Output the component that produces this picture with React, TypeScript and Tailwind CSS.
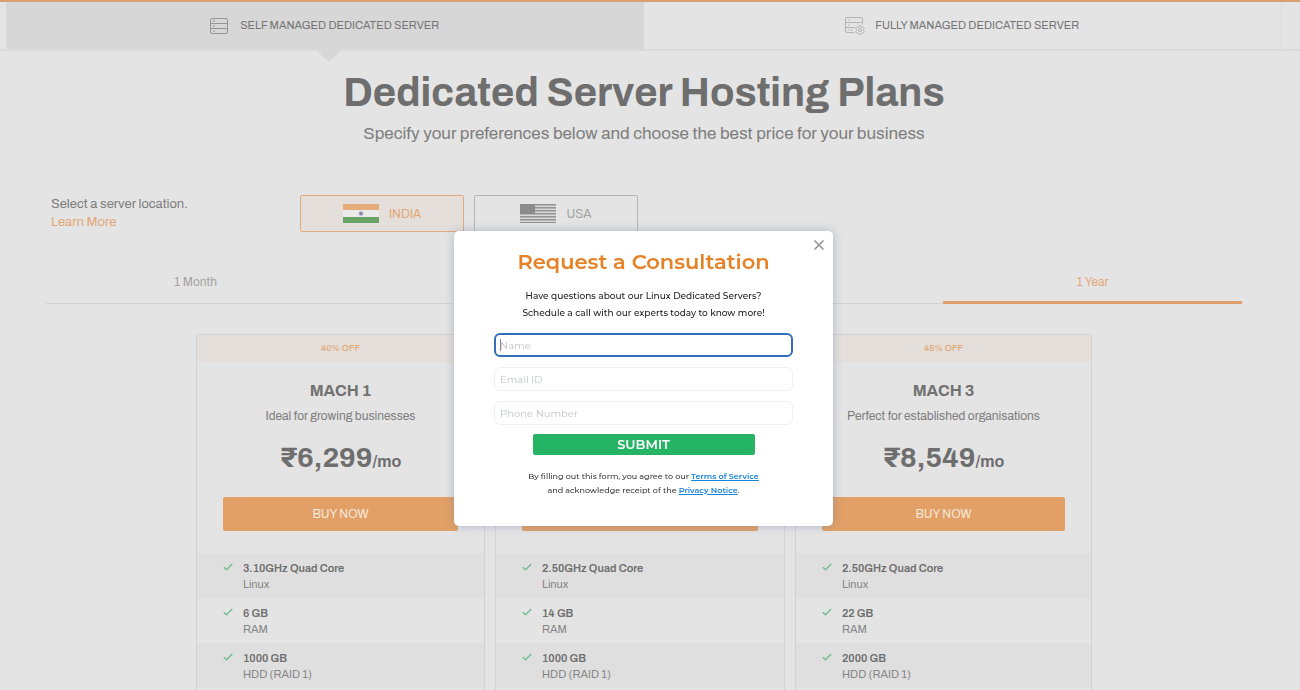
import type { ReactNode } from "react";

type Feature = { value: string; label: string };

type Plan = {
  name: string;
  discount: string;
  description: string;
  price: string;
  features: Feature[];
  behindDialog?: boolean;
};

const plans: Plan[] = [
  {
    name: "MACH 1",
    discount: "40% OFF",
    description: "Ideal for growing businesses",
    price: "₹6,299",
    features: [
      { value: "3.10GHz Quad Core", label: "Linux" },
      { value: "6 GB", label: "RAM" },
      { value: "1000 GB", label: "HDD (RAID 1)" },
    ],
  },
  {
    name: "MACH 2",
    discount: "40% OFF",
    description: "Ideal for growing businesses",
    price: "₹7,499",
    behindDialog: true,
    features: [
      { value: "2.50GHz Quad Core", label: "Linux" },
      { value: "14 GB", label: "RAM" },
      { value: "1000 GB", label: "HDD (RAID 1)" },
    ],
  },
  {
    name: "MACH 3",
    discount: "45% OFF",
    description: "Perfect for established organisations",
    price: "₹8,549",
    features: [
      { value: "2.50GHz Quad Core", label: "Linux" },
      { value: "22 GB", label: "RAM" },
      { value: "2000 GB", label: "HDD (RAID 1)" },
    ],
  },
];

const periods = ["1 Month", "3 Months", "6 Months", "1 Year"];

function ServerIcon() {
  return (
    <svg width="18" height="16" viewBox="0 0 18 16" fill="none" stroke="#959595" aria-hidden="true">
      <rect x="0.5" y="0.5" width="17" height="15" rx="1.5" />
      <path d="M0.5 5.5h17M0.5 10.5h17" />
      <path d="M3 3h2M3 8h2M3 13h2" />
    </svg>
  );
}

function ManagedServerIcon() {
  return (
    <svg width="20" height="18" viewBox="0 0 20 18" fill="none" stroke="#b3b3b3" aria-hidden="true">
      <path d="M9 15.5H2A1.5 1.5 0 0 1 0.5 14V2A1.5 1.5 0 0 1 2 0.5h14A1.5 1.5 0 0 1 17.5 2v5.5" />
      <path d="M0.5 5.5h17M0.5 10.5h9" />
      <path d="M3 3h1.500M3 8h1.500M3 13h1.500M6 13h2" />
      <path d="M14.200 8.700h1.600l0.400 1.300 1.200 0.500 1.200-0.400 0.800 1.400-0.900 1 0 1.200 0.900 1-0.800 1.400-1.200-0.300-1.200 0.500-0.400 1.200h-1.600l-0.400-1.200-1.200-0.500-1.200 0.300-0.800-1.400 0.900-1 0-1.200-0.900-1 0.800-1.400 1.200 0.400 1.200-0.500z" />
      <circle cx="15" cy="13" r="1.500" />
    </svg>
  );
}

function IndiaFlag() {
  return (
    <svg width="36" height="19" viewBox="0 0 36 19" aria-hidden="true">
      <rect width="36" height="19" fill="#ebebeb" />
      <rect width="36" height="6" fill="#e5ab78" />
      <rect y="13" width="36" height="6" fill="#6aa566" />
      <circle cx="18" cy="9.500" r="2.300" fill="#a9a6c2" />
      <circle cx="18" cy="9.500" r="1.300" fill="#8482ad" />
    </svg>
  );
}

function UsaFlag() {
  return (
    <svg width="36" height="19" viewBox="0 0 36 19" aria-hidden="true">
      <rect width="36" height="19" fill="#d9d9d9" />
      {[0, 3, 6, 9, 12, 15, 18].map((y) => (
        <rect key={y} y={y} width="36" height="1.500" fill="#929292" />
      ))}
      <rect width="15" height="10" fill="#8b8b8b" />
    </svg>
  );
}

function CheckIcon() {
  return (
    <svg width="10" height="8" viewBox="0 0 10 8" fill="none" stroke="#74bd94" strokeWidth="1.500" aria-hidden="true">
      <path d="M0.800 4.200 3.500 6.800 9.200 1" />
    </svg>
  );
}

function PlanCard({ plan }: { plan: Plan }) {
  return (
    <article className="rounded-t-[3px] border border-[#d2d2d2]">
      <p
        className={`bg-[#e4dfda] text-center text-[9px] leading-[27px] font-medium text-[#e3a775] ${
          plan.behindDialog ? "invisible" : ""
        }`}
      >
        {plan.discount}
      </p>
      <div className="px-[26px] pb-[22px] text-center">
        <div className={plan.behindDialog ? "invisible" : ""}>
          <h2 className="pt-[17px] text-base leading-6 font-bold text-[#727272]">{plan.name}</h2>
          <p className="mt-[3px] text-xs leading-5 text-[#7d7d7d]">{plan.description}</p>
          <p className="mt-3 text-[28px] leading-10 font-bold text-[#6e6e6e]">
            {plan.price}
            <span className="text-base">/mo</span>
          </p>
        </div>
        <button type="button" className="mt-[19px] block h-[34px] w-full rounded-[2px] bg-[#e2a066] text-xs text-[#f5e8dc]">
          BUY NOW
        </button>
      </div>
      <ul className="pb-6">
        {plan.features.map((feature) => (
          <li key={feature.label} className="flex h-[45px] items-start gap-2.5 px-[26px] pt-[7px] odd:bg-[#dfdfdf]">
            <span className="pt-[3px]">
              <CheckIcon />
            </span>
            <p className="text-[11px] leading-4 text-[#858585]">
              <strong className="block font-semibold text-[#6e6e6e]">{feature.value}</strong>
              {feature.label}
            </p>
          </li>
        ))}
      </ul>
    </article>
  );
}

function LocationButton({ active, children }: { active?: boolean; children: ReactNode }) {
  return (
    <button
      type="button"
      aria-pressed={!!active}
      className={`flex h-[37px] w-[164px] items-center justify-center gap-2.5 rounded-[2px] border text-xs ${
        active ? "border-[#e3aa7c] bg-[#e4dfdb] text-[#e3a775]" : "border-[#b5b5b5] text-[#a3a3a3]"
      }`}
    >
      {children}
    </button>
  );
}

function Field({ label, type = "text", focused }: { label: string; type?: string; focused?: boolean }) {
  return (
    <div className="relative w-full">
      <input
        type={type}
        aria-label={label}
        placeholder={label}
        autoFocus={focused}
        className="block h-6 w-full rounded-md border border-[#f0f0f1] px-[5px] text-[10px] text-[#444] caret-transparent outline-none placeholder:text-[#c3c5cb] focus:border-2 focus:border-[#2f70b8] focus:px-1"
      />
      {focused && <span className="absolute top-1.5 left-1.5 h-3 w-px bg-[#8a8a8a]" />}
    </div>
  );
}

function ConsultationDialog() {
  return (
    <div className="fixed inset-0 flex items-start justify-center pt-[231px] pr-[13px]">
      <section
        role="dialog"
        aria-modal="true"
        aria-labelledby="dialog-title"
        className="relative w-[379px] rounded-[5px] bg-white px-10 pt-[17px] pb-[29px] text-center font-['Montserrat','Inter',sans-serif] shadow-[0_0_10px_rgba(110,125,165,0.45)]"
      >
        <button type="button" aria-label="Close" className="absolute top-2 right-2 flex size-3 items-center justify-center">
          <svg width="12" height="12" viewBox="0 0 12 12" stroke="#929292" strokeWidth="1.500" aria-hidden="true">
            <path d="M1.500 1.500l9 9M10.500 1.500l-9 9" />
          </svg>
        </button>
        <h2 id="dialog-title" className="text-[21px] leading-7 font-semibold text-[#e68225]">
          Request a Consultation
        </h2>
        <p className="mt-[11px] text-[9px] leading-[17px] font-medium text-[#222]">
          Have questions about our Linux Dedicated Servers?
          <br />
          Schedule a call with our experts today to know more!
        </p>
        <form className="mt-3 flex flex-col items-center" onSubmit={(e) => e.preventDefault()}>
          <div className="flex w-full flex-col gap-2.5">
            <Field label="Name" focused />
            <Field label="Email ID" type="email" />
            <Field label="Phone Number" type="tel" />
          </div>
          <button type="submit" className="mt-[9px] h-[21px] w-[222px] rounded-[2px] bg-[#25b463] pb-px text-[13px] leading-5 font-semibold text-white">
            SUBMIT
          </button>
        </form>
        <p className="mt-3.5 text-[8px] leading-3.5 font-medium text-[#3a3a3a]">
          By filling out this form, you agree to our{" "}
          <a href="#terms" className="font-semibold text-[#1683dc] underline">
            Terms of Service
          </a>
          <br />
          and acknowledge receipt of the{" "}
          <a href="#privacy" className="font-semibold text-[#1683dc] underline">
            Privacy Notice
          </a>
          .
        </p>
      </section>
    </div>
  );
}

export default function App() {
  return (
    <div className="h-screen overflow-hidden bg-[#e4e4e4] font-['Archivo','Liberation_Sans',sans-serif] text-[#7d7d7d]">
      <header className="border-t-2 border-b-2 border-t-[#d8a070] border-b-[#dadada] pr-[18px] pl-1.5">
        <nav className="grid grid-cols-2 border-r border-[#dadada] text-[11px] text-[#747474]">
          <a href="#self-managed" className="relative flex h-[47px] items-center justify-center gap-3 bg-[#d7d7d7]">
            <ServerIcon />
            SELF MANAGED DEDICATED SERVER
            <svg className="absolute top-full left-1/2 -ml-2" width="24" height="13" viewBox="0 0 24 13" aria-hidden="true">
              <path d="M0 0h24v2L12 13 0 2z" fill="#d7d7d7" />
            </svg>
          </a>
          <a href="#fully-managed" className="flex h-[47px] items-center justify-center gap-2.5">
            <ManagedServerIcon />
            FULLY MANAGED DEDICATED SERVER
          </a>
        </nav>
      </header>

      <main className="pr-[58px] pl-[46px]">
        <div className="pt-[18px] text-center">
          <h1 className="text-[40px] leading-[48px] font-bold text-[#6e6e6e]">Dedicated Server Hosting Plans</h1>
          <p className="mt-[5px] text-[17px] leading-6 text-[#7d7d7d]">
            Specify your preferences below and choose the best price for your business
          </p>
        </div>

        <div className="mt-[49px] flex">
          <p className="w-[254px] pl-[5px] text-[13px] leading-[18px] text-[#7d7d7d]">
            Select a server location.
            <br />
            <a href="#locations" className="text-[#e3a775]">
              Learn More
            </a>
          </p>
          <div className="flex gap-2.5">
            <LocationButton active>
              <IndiaFlag />
              INDIA
            </LocationButton>
            <LocationButton>
              <UsaFlag />
              USA
            </LocationButton>
          </div>
        </div>

        <div role="tablist" aria-label="Billing period" className="mt-[27px] grid grid-cols-4 text-xs text-[#a3a3a3]">
          {periods.map((period) => (
            <button
              key={period}
              type="button"
              role="tab"
              aria-selected={period === "1 Year"}
              className="h-[45px] border-b border-[#d2d2d2] pt-0.5 aria-selected:border-b-3 aria-selected:border-[#dea068] aria-selected:pt-1 aria-selected:text-[#e3a775]"
            >
              {period}
            </button>
          ))}
        </div>

        <section className="mx-auto mt-[30px] grid max-w-[896px] grid-cols-[289fr_290fr_297fr] gap-2.5">
          {plans.map((plan) => (
            <PlanCard key={plan.name} plan={plan} />
          ))}
        </section>
      </main>

      <ConsultationDialog />
    </div>
  );
}
